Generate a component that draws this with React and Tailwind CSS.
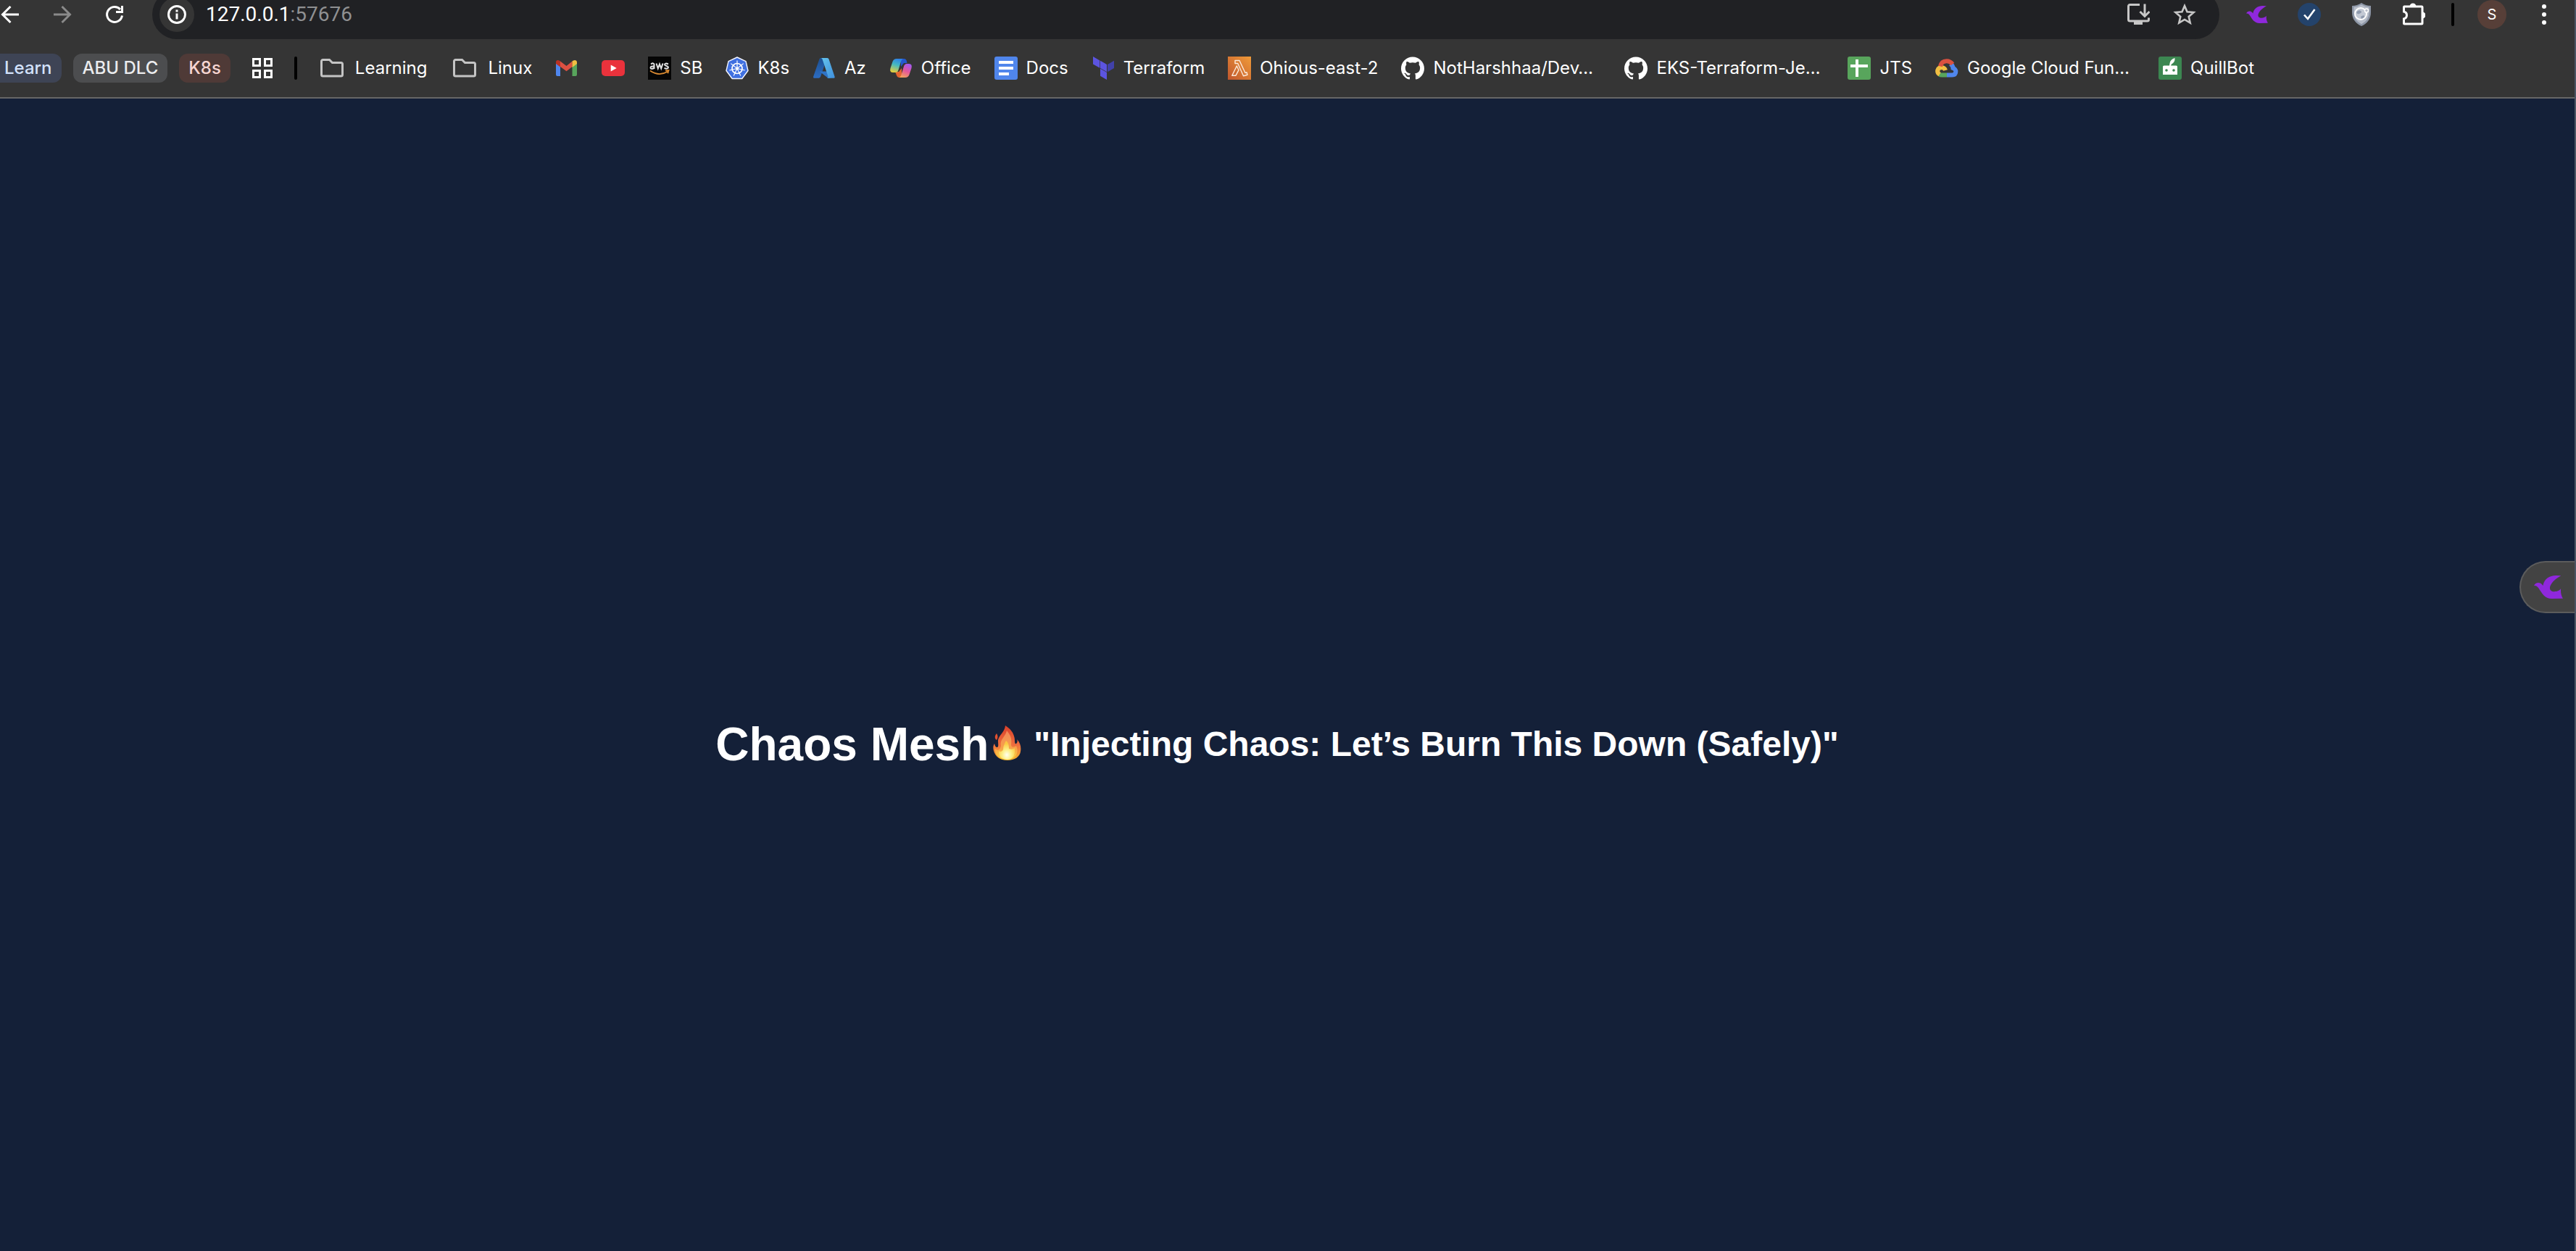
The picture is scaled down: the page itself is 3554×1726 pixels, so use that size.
import { SiGithub } from "react-icons/si";

const Svg = ({ children, box = "0 0 32 32", className = "size-8" }) => (
  <svg viewBox={box} className={`shrink-0 ${className}`} fill="none" aria-hidden="true">
    {children}
  </svg>
);

const Dove = ({ className }) => (
  <Svg box="0 0 122 98" className={className}>
    <path
      fill="#8f28dc"
      d="M0 43C6 29 23 26 34 38L38 43C42 14 66 1 92 0L114 1C94 12 76 27 69 44C64 55 68 68 82 68C97 69 109 63 113 56L113 63C113 77 116 87 122 97L76 98C44 98 33 73 20 54C13 44 6 42 0 43Z"
    />
  </Svg>
);

const Folder = () => (
  <Svg>
    <path d="M1.5 25V6.5a2 2 0 0 1 2-2h9l4 4h12a2 2 0 0 1 2 2V25a2 2 0 0 1-2 2h-25a2 2 0 0 1-2-2Z" stroke="#c4c4c4" strokeWidth="3" />
  </Svg>
);

const Gmail = () => (
  <Svg>
    <path fill="#4f86ee" d="M1 9l6 4.500V27H3a2 2 0 0 1-2-2Z" />
    <path fill="#58a55c" d="M30 9l-6.500 4.500V27H28a2 2 0 0 0 2-2Z" />
    <path fill="#dc5042" d="M7 6.500l8.500 6.500 8-6.500V14l-8 6.300L7 14Z" />
    <path fill="#f1bf42" d="M23.500 6.500l1.500-1c2.500-1.500 5 0 5 2.500V10l-6.500 5Z" />
    <path fill="#b93225" d="M7 6.500l-1.500-1C3 4 1 5.500 1 8v2l6 4.500Z" />
  </Svg>
);

const YouTube = () => (
  <Svg>
    <rect y="5" width="32" height="22" rx="5" fill="#ea323c" />
    <path fill="#fff" d="M12.700 11.500v9l8-4.500Z" />
  </Svg>
);

const Aws = () => (
  <Svg>
    <rect width="32" height="32" fill="#050505" />
    <path d="M4 10.500q4-2.500 4.500.500v6M8.500 13.500q-5-.5-5 2t5 .5M11.500 9.500l2.300 7 2.200-6 2.200 6 2.300-7M28 10.500q-4.500-2-5 .5c0 2.500 5 1.500 5 4q-.5 2.700-5.500 1" stroke="#e4e4e4" strokeWidth="2" />
    <path d="M3 19.500q12 8.500 24 1.200M24 19.300l4.500-.3-1.200 4.200" stroke="#d98a32" strokeWidth="1.800" />
  </Svg>
);

const Kubernetes = () => (
  <Svg>
    <path fill="#4070e0" stroke="#f4f6ff" strokeWidth="1.400" strokeLinejoin="round" d="M16 1l12 5.700L31 19.500 22.800 30.500H9.200L1 19.500 4 6.700Z" />
    <circle cx="16" cy="16.500" r="7" stroke="#fff" strokeWidth="1.700" />
    <circle cx="16" cy="16.500" r="2" fill="#fff" />
    <path stroke="#fff" strokeWidth="1.200" d="M16 16.500V5.500M16 16.500l8.700-6.900M16 16.500l10.700 2.500M16 16.500l4.800 10M16 16.500l-4.800 10M16 16.500L5.300 19M16 16.500L7.300 9.600" />
  </Svg>
);

const Azure = () => (
  <Svg>
    <defs>
      <linearGradient id="azL" x1="0" y1="0" x2="0" y2="1"><stop stopColor="#1c4f91" /><stop offset="1" stopColor="#2c6cc0" /></linearGradient>
      <linearGradient id="azR" x1="0" y1="0" x2="1" y2="1"><stop stopColor="#65c5ee" /><stop offset="1" stopColor="#3f8fdc" /></linearGradient>
    </defs>
    <path fill="url(#azL)" d="M11 2h9l-9 26q-.8 1.800-2.500 1.800H3q-2.500 0-1.800-2.300L9.500 3.500Q10 2 11 2Z" />
    <path fill="#2f74c6" d="M9.500 20.500h13l2 9.300h-3Z" />
    <path fill="url(#azR)" d="M11.500 2h9q1.500 0 2 1.500l8 24q.7 2.300-1.500 2.300h-9q2-.3 1.500-2.300l-8-24Q13 2 11.500 2Z" />
  </Svg>
);

const Copilot = () => (
  <Svg>
    <defs>
      <linearGradient id="cpA" x1="0.600" y1="0" x2="0.300" y2="1"><stop stopColor="#2f83e8" /><stop offset=".45" stopColor="#45b9c0" /><stop offset="1" stopColor="#e8cf3a" /></linearGradient>
      <linearGradient id="cpB" x1="0.700" y1="0" x2="0.300" y2="1"><stop stopColor="#a45af0" /><stop offset=".5" stopColor="#e4569b" /><stop offset="1" stopColor="#f3a25c" /></linearGradient>
    </defs>
    <path fill="#2458cf" d="M16 3h4.500q2.500 0 3.200 2.500L24.500 9H20l-4 5Z" />
    <path fill="#e4642f" d="M8 21h5l4-5v9l2 4h-5q-3 0-4-3Z" />
    <path fill="url(#cpA)" d="M10 3h9q-2 .5-3 4l-3.500 11.500Q11.500 22 8.500 22H5q-5 0-3.500-6l3-9Q6 3 10 3Z" />
    <path fill="url(#cpB)" d="M22 29h-9q2.500-.5 3.500-4L20 13.500Q21 10 24 10h3q5 0 3.500 6l-3 9Q26 29 22 29Z" />
  </Svg>
);

const Docs = () => (
  <Svg>
    <rect width="32" height="32" rx="3" fill="#5086ec" />
    <path fill="#fff" d="M6 6h20v4H6zM6 14h20v4H6zM6 22h14v4H6z" />
  </Svg>
);

const Terraform = () => (
  <Svg>
    <path fill="#5c54e0" d="M2 0l9.300 5.400v10.300L2 10.400zM12 5.700l9 5.200v10.300l-9-5.300zM12 16.700l9 5.200V32l-9-5.300z" />
    <path fill="#4141a9" d="M22 10.900l9-5.200v10.200l-9 5.300z" />
  </Svg>
);

const Lambda = () => (
  <Svg>
    <defs>
      <linearGradient id="lam" x1="0" y1="1" x2="1" y2="0"><stop stopColor="#c0562d" /><stop offset="1" stopColor="#f09b39" /></linearGradient>
    </defs>
    <rect width="32" height="32" fill="url(#lam)" />
    <path stroke="#fbe9da" strokeWidth="1.400" strokeLinejoin="round" d="M10 5.500h6l8 17 2-.7 1 3.500-5.500 1.500-7.800-17.300H10zM12.300 13l2.700 5.700-4 7.500H5.800z" />
  </Svg>
);

const GitHub = () => <SiGithub className="size-8 shrink-0 text-white" aria-hidden="true" />;

const Sheets = () => (
  <Svg>
    <rect width="32" height="32" rx="3" fill="#58a55c" />
    <path fill="#fff" d="M4 11h7V4h4v7h13v4H15v13h-4V15H4z" />
  </Svg>
);

const Cloud = () => (
  <Svg>
    <path stroke="#5086ec" strokeWidth="6" d="M21 10q3.500 2.500 3.500 6 4 1.500 3.800 5-.3 4.500-5 4.500H16" />
    <path stroke="#58a55c" strokeWidth="6" d="M16 25.500H9q-2 0-3.500-1.200" />
    <path stroke="#f1bf42" strokeWidth="6" d="M6 24.800q-3.500-2.300-2.700-6Q4.500 15 9 15q4 .5 5 4" />
    <path stroke="#d95140" strokeWidth="6" d="M7 13.500q1.500-7 8.500-7.300 5-.2 8.300 4.300" />
  </Svg>
);

const Quill = () => (
  <Svg>
    <rect width="32" height="32" rx="3" fill="#3c8751" />
    <path fill="#fff" d="M6 14q0-1.500 1.500-1.500H15l.5-3Q16 4 22.500 2q.5 6-4.500 8.500l-1 2h7.500q1.500 0 1.500 1.500v11H6Z" />
    <circle cx="11" cy="19" r="1.800" fill="#3c8751" />
    <circle cx="21" cy="19" r="1.800" fill="#3c8751" />
  </Svg>
);

const Fire = () => (
  <svg viewBox="0 0 48 64" className="h-16 w-12 shrink-0" role="img" aria-label="fire">
    <defs>
      <linearGradient id="flameOut" x1="0" y1="0" x2="0" y2="1"><stop stopColor="#d9402a" /><stop offset=".55" stopColor="#ee6d3e" /><stop offset="1" stopColor="#f5b52f" /></linearGradient>
      <linearGradient id="flameMid" x1="0" y1="0" x2="0" y2="1"><stop stopColor="#f2875a" /><stop offset=".6" stopColor="#f7a24a" /><stop offset="1" stopColor="#fbd63c" /></linearGradient>
      <radialGradient id="flameIn" cx=".5" cy=".75" r=".6"><stop stopColor="#fffef0" /><stop offset=".45" stopColor="#fdf08a" /><stop offset="1" stopColor="#fbc840" /></radialGradient>
    </defs>
    <path fill="url(#flameOut)" d="M23 6C31 11 36 18 36 27C36 31 37 32 38 31C40 29 40 27 39 25C44 30 45 36 44 42C43 49 36 54 26 54C15 54 9 48 7 41C6 37 6 34 8 31C9 35 10 36 12 36C14 35 13 31 13 28C12 21 22 16 23 6Z" />
    <path fill="#e2502f" d="M11 17C13 20 13 23 11 26C8 24 8 20 11 17Z" />
    <path fill="url(#flameMid)" d="M25 13C31 20 32 25 31 33C32 37 35 36 38 34C42 43 38 52 26 53C14 53 8 45 9 38C13 42 16 39 17 34C15 25 23 22 25 13Z" />
    <path fill="url(#flameIn)" d="M24 27C28 30 28 35 28 38C31 39 34 39 36 37C37 46 34 53 26 53C18 53 13 48 14 41C16 43 19 42 20 39C20 34 22 31 24 27Z" />
  </svg>
);

const Divider = ({ className }) => <span className={`h-8 w-1 shrink-0 rounded-full bg-black ${className}`} />;

const bookmarks = [
  { label: "SB", Icon: Aws },
  { label: "K8s", Icon: Kubernetes },
  { label: "Az", Icon: Azure },
  { label: "Office", Icon: Copilot },
  { label: "Docs", Icon: Docs },
  { label: "Terraform", Icon: Terraform },
  { label: "Ohious-east-2", Icon: Lambda },
  { label: "NotHarshhaa/Dev…", Icon: GitHub, wide: true },
  { label: "EKS-Terraform-Je…", Icon: GitHub, wide: true },
  { label: "JTS", Icon: Sheets },
  { label: "Google Cloud Fun…", Icon: Cloud, wide: true },
  { label: "QuillBot", Icon: Quill },
];

const IconButton = ({ label, className = "", children }) => (
  <button type="button" aria-label={label} className={`flex shrink-0 items-center justify-center ${className}`}>
    {children}
  </button>
);

function Toolbar() {
  return (
    <div className="-mt-3.5 flex h-17 items-center">
      <nav className="flex shrink-0 items-center gap-10 pr-9" aria-label="History">
        <IconButton label="Back" className="w-8 -ml-0.5">
          <Svg><path d="M28 16H6M16.500 5L5.500 16l11 11" stroke="#fff" strokeWidth="3" /></Svg>
        </IconButton>
        <IconButton label="Forward" className="w-8">
          <Svg><path d="M4 16h22M15.500 5l11 11-11 11" stroke="#8a8a8a" strokeWidth="3" /></Svg>
        </IconButton>
        <IconButton label="Reload" className="w-8">
          <Svg>
            <path d="M26.500 17.500A10.500 10.500 0 1 1 24 9" stroke="#fff" strokeWidth="3" />
            <path d="M28 4v10H18v-3h7V4z" fill="#fff" />
          </Svg>
        </IconButton>
      </nav>
      <div className="flex h-17 min-w-0 flex-1 items-center rounded-full bg-[#202124] pr-8 pl-2.5">
        <IconButton label="Site information" className="size-12 rounded-full bg-[#353535]">
          <Svg>
            <circle cx="16" cy="16" r="11.500" stroke="#fff" strokeWidth="3" />
            <path d="M14.500 14.500h3v8h-3zM14.500 9.500h3v3h-3z" fill="#fff" />
          </Svg>
        </IconButton>
        <p className="ml-4 flex-1 font-['Roboto',sans-serif] text-[28px] text-white">
          127.0.0.1<span className="text-[#8f9092]">:57676</span>
        </p>
        <div className="flex gap-8">
          <IconButton label="Install app">
            <Svg>
              <path d="M18 2.500H4.500a2 2 0 0 0-2 2V23a2 2 0 0 0 2 2h24a2 2 0 0 0 2-2v-2.500M25 1.500V18M18.500 12l6.500 6.500 6.500-6.500" stroke="#c7c7c7" strokeWidth="3" />
              <path d="M10 25h12v5H10z" fill="#c7c7c7" />
            </Svg>
          </IconButton>
          <IconButton label="Bookmark this page">
            <Svg>
              <path d="M16 4l3.500 8.200 9 .8-6.800 5.900 2 8.700L16 23l-7.700 4.600 2-8.700L3.500 13l9-.8Z" stroke="#c7c7c7" strokeWidth="2.600" />
            </Svg>
          </IconButton>
        </div>
      </div>
      <div className="flex shrink-0 items-center pr-6.5 pl-9">
        <IconButton label="Dove extension" className="w-8"><Dove className="h-6 w-8" /></IconButton>
        <IconButton label="Task extension" className="ml-10">
          <Svg>
            <circle cx="16" cy="16" r="16" fill="#24436b" />
            <path d="M9 16.500l5 5.500 9.500-13" stroke="#fff" strokeWidth="2.600" />
          </Svg>
        </IconButton>
        <IconButton label="Privacy extension" className="ml-10">
          <Svg>
            <path fill="#8d96a6" d="M16 0q6 4 13 4v9q0 13-13 19Q3 26 3 13V4q7 0 13-4Z" />
            <path fill="#b7bdc9" d="M16 2.500q5 3 10.500 3.300V13q0 11-10.500 16.200Q5.500 24 5.500 13V5.800Q11 5.500 16 2.500Z" />
            <circle cx="15" cy="15" r="8" stroke="#fff" strokeWidth="2" fill="#c3c9d4" />
            <path fill="#8f9aad" d="M9 13q3-4 6-2t-2 4q-3 1-4-2ZM15 19q4-3 5-1t-4 4Z" />
            <circle cx="23" cy="10.500" r="2.500" fill="#b7bdc9" stroke="#fff" strokeWidth="1.500" />
          </Svg>
        </IconButton>
        <IconButton label="Extensions" className="ml-10">
          <Svg>
            <path d="M2.500 5h24.500q1 0 1 1v22q0 1-1 1H3.500q-1 0-1-1v-6q4-1 4-5t-4-5V6q0-1 1-1" stroke="#fff" strokeWidth="3" />
            <path d="M10.500 5a4.500 4.500 0 0 1 9 0ZM28 12.500a4.500 4.500 0 0 1 0 9Z" fill="#fff" />
          </Svg>
        </IconButton>
        <Divider className="ml-9" />
        <IconButton label="Profile" className="ml-8 size-10 rounded-full bg-[#573f38] text-xl text-white">S</IconButton>
        <IconButton label="Menu" className="ml-9">
          <Svg>
            <circle cx="16" cy="5" r="3" fill="#fff" />
            <circle cx="16" cy="16" r="3" fill="#fff" />
            <circle cx="16" cy="27" r="3" fill="#fff" />
          </Svg>
        </IconButton>
      </div>
    </div>
  );
}

function BookmarksBar() {
  return (
    <nav aria-label="Bookmarks" className="flex h-20 items-center text-2xl whitespace-nowrap text-white">
      <div className="flex shrink-0 gap-4 font-medium">
        <button type="button" className="h-10 rounded-r-xl bg-[#3e4455] pr-[13px] pl-1.5 text-[#d3e2fc]">Learn</button>
        <button type="button" className="h-10 rounded-xl bg-[#4c4d4f] px-[13px] text-[#ebecee]">ABU DLC</button>
        <button type="button" className="h-10 rounded-xl bg-[#4f3a37] px-[13px] text-[#f6d5d1]">K8s</button>
      </div>
      <IconButton label="Apps" className="ml-7">
        <Svg>
          <path d="M3.500 3.500h9v9h-9zM19.500 3.500h9v9h-9zM3.500 19.500h9v9h-9zM19.500 19.500h9v9h-9z" stroke="#fff" strokeWidth="3" />
        </Svg>
      </IconButton>
      <Divider className="ml-7" />
      <div className="ml-8 flex shrink-0 gap-9">
        <button type="button" className="flex items-center gap-4"><Folder />Learning</button>
        <button type="button" className="flex items-center gap-4"><Folder />Linux</button>
      </div>
      <div className="ml-8 flex shrink-0 gap-8">
        <a href="#gmail" aria-label="Gmail"><Gmail /></a>
        <a href="#youtube" aria-label="YouTube"><YouTube /></a>
        {bookmarks.map(({ label, Icon, wide }) => (
          <a key={label} href={`#${label}`} className={`flex items-center gap-3 ${wide ? "w-69" : ""}`}>
            <Icon />
            {label}
          </a>
        ))}
      </div>
    </nav>
  );
}

export default function App() {
  return (
    <div className="relative flex min-h-screen flex-col overflow-hidden border-r-2 border-[#4b5563] bg-[#142038] font-['Inter',sans-serif]">
      <header className="overflow-hidden border-b-2 border-[#666666] bg-[#353535]">
        <Toolbar />
        <BookmarksBar />
      </header>
      <main className="flex flex-1 items-center justify-center pt-48 pr-7 font-['Liberation_Sans',Arial,sans-serif] font-bold text-white">
        <h1 className="text-[64px]">Chaos Mesh</h1>
        <Fire />
        <h2 className="ml-3.5 text-5xl">"Injecting Chaos: Let’s Burn This Down (Safely)"</h2>
      </main>
      <button
        type="button"
        aria-label="Open side panel"
        className="absolute top-[774px] right-0 flex h-18 items-center rounded-l-full border-2 border-r-0 border-[#5c5c5c] bg-[#434343] pr-4 pl-4.5"
      >
        <Dove className="h-8 w-10" />
      </button>
    </div>
  );
}
